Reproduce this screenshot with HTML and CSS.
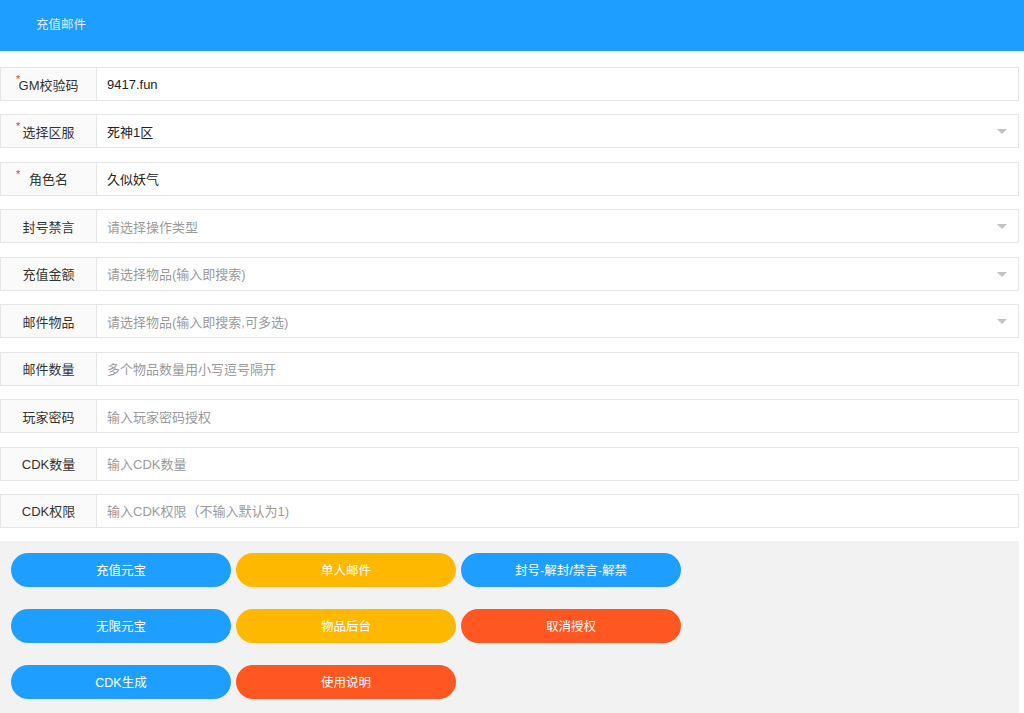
FILE: index.html
```html
<!DOCTYPE html>
<html lang="zh-CN">
<head>
<meta charset="utf-8">
<title>充值邮件</title>
<link rel="stylesheet" href="styles.css">
</head>
<body>
<div class="page">
  <div class="header">充值邮件</div>
  <div class="form">
    <div class="row">
      <div class="label"><span class="req req-tight">*</span>GM校验码</div>
      <div class="field value">9417.fun</div>
    </div>
    <div class="row">
      <div class="label"><span class="req">*</span>选择区服</div>
      <div class="field value select">死神1区<span class="arrow"></span></div>
    </div>
    <div class="row">
      <div class="label"><span class="req req-wide">*</span>角色名</div>
      <div class="field value">久似妖气</div>
    </div>
    <div class="row">
      <div class="label">封号禁言</div>
      <div class="field ph select">请选择操作类型<span class="arrow"></span></div>
    </div>
    <div class="row">
      <div class="label">充值金额</div>
      <div class="field ph select">请选择物品(输入即搜索)<span class="arrow"></span></div>
    </div>
    <div class="row">
      <div class="label">邮件物品</div>
      <div class="field ph select">请选择物品(输入即搜索,可多选)<span class="arrow"></span></div>
    </div>
    <div class="row">
      <div class="label">邮件数量</div>
      <div class="field ph">多个物品数量用小写逗号隔开</div>
    </div>
    <div class="row">
      <div class="label">玩家密码</div>
      <div class="field ph">输入玩家密码授权</div>
    </div>
    <div class="row">
      <div class="label">CDK数量</div>
      <div class="field ph">输入CDK数量</div>
    </div>
    <div class="row">
      <div class="label">CDK权限</div>
      <div class="field ph">输入CDK权限（不输入默认为1)</div>
    </div>
  </div>
  <div class="actions">
    <div class="btn blue">充值元宝</div>
    <div class="btn orange">单人邮件</div>
    <div class="btn blue">封号-解封/禁言-解禁</div>
    <div class="btn blue">无限元宝</div>
    <div class="btn orange">物品后台</div>
    <div class="btn red">取消授权</div>
    <div class="btn blue">CDK生成</div>
    <div class="btn red">使用说明</div>
  </div>
</div>
</body>
</html>
```

FILE: styles.css
```css
html, body {
  margin: 0;
  padding: 0;
  background: #fff;
}
body {
  font-family: "Liberation Sans", "Noto Sans CJK SC", sans-serif;
  font-size: 13px;
  color: #333;
  overflow: hidden;
}
.page {
  width: 1019px;
}
.header {
  height: 51px;
  line-height: 50px;
  background: #1E9FFF;
  color: rgba(255, 255, 255, 0.85);
  font-size: 12.5px;
  padding-left: 36px;
  width: 1024px;
  box-sizing: border-box;
  box-shadow: 0 1px 2px rgba(0, 0, 0, 0.08);
}
.form {
  padding-top: 16px;
  display: flex;
  flex-direction: column;
  gap: 13.45px;
}
.row {
  display: flex;
  height: 34px;
}
.label {
  width: 97px;
  box-sizing: border-box;
  border: 1px solid #e6e6e6;
  background: #fafafa;
  display: flex;
  align-items: center;
  justify-content: center;
  position: relative;
  color: #333;
  font-size: 13px;
}
.req {
  color: #e33;
  font-size: 11px;
  position: absolute;
  top: 6px;
  left: 15px;
  line-height: 1;
}
.req-tight { left: 15px; top: 6px; }
.req-wide { left: 15px; }
.field {
  flex: 1;
  box-sizing: border-box;
  border: 1px solid #e6e6e6;
  border-left: none;
  display: flex;
  align-items: center;
  padding-left: 10px;
  position: relative;
  font-size: 13px;
}
.value { color: #222; }
.ph { color: #9a9a9a; }
.arrow {
  position: absolute;
  right: 11px;
  top: 50%;
  margin-top: -2px;
  width: 0;
  height: 0;
  border-left: 5px solid transparent;
  border-right: 5px solid transparent;
  border-top: 5px solid #c2c2c2;
}
.actions {
  margin-top: 13px;
  background: #f2f2f2;
  padding: 12px 0 20px 11px;
  display: grid;
  grid-template-columns: repeat(3, 220px);
  column-gap: 5px;
  row-gap: 22px;
}
.btn {
  height: 34px;
  border-radius: 17px;
  color: #fff;
  font-size: 12.5px;
  display: flex;
  align-items: center;
  justify-content: center;
}
.blue { background: #1E9FFF; }
.orange { background: #FFB800; }
.red { background: #FF5722; }
```
